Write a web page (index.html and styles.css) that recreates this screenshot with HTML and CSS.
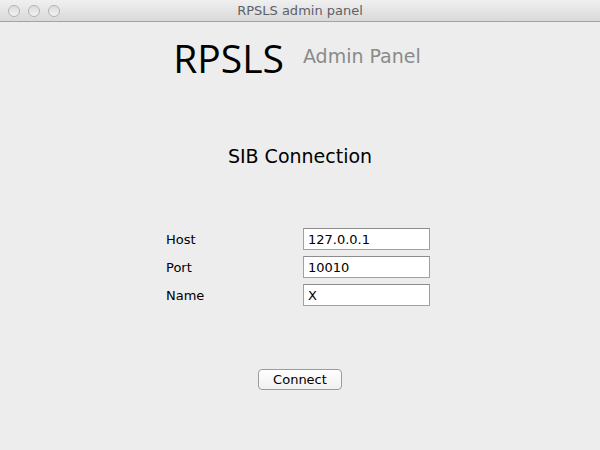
FILE: index.html
```html
<!DOCTYPE html>
<html>
<head>
<meta charset="utf-8">
<link rel="stylesheet" href="styles.css">
</head>
<body>
<div class="window">
  <div class="titlebar">
    <div class="lights">
      <span class="light"></span><span class="light"></span><span class="light"></span>
    </div>
    <div class="title">RPSLS admin panel</div>
  </div>
  <div class="content">
    <div class="header">
      <span class="brand">RPSLS</span>
      <span class="subtitle">Admin Panel</span>
    </div>
    <div class="section-title">SIB Connection</div>
    <div class="form">
      <label class="label">Host</label><input class="field" value="127.0.0.1">
      <label class="label">Port</label><input class="field" value="10010">
      <label class="label">Name</label><input class="field" value="X">
    </div>
    <button class="btn">Connect</button>
  </div>
</div>
</body>
</html>
```
FILE: styles.css
```css
html, body {
  margin: 0;
  padding: 0;
}
body {
  width: 600px;
  height: 450px;
  overflow: hidden;
  font-family: "DejaVu Sans", "Liberation Sans", sans-serif;
  background: #ededed;
}
.window {
  width: 600px;
  height: 450px;
  display: flex;
  flex-direction: column;
  background: #ededed;
}
.titlebar {
  height: 21px;
  border-bottom: 1px solid #a3a3a3;
  background: linear-gradient(#f0f0f0, #d9d9d9);
  display: flex;
  align-items: center;
  position: relative;
}
.lights {
  display: flex;
  gap: 8px;
  padding-left: 8px;
}
.light {
  width: 10px;
  height: 10px;
  border-radius: 50%;
  border: 1px solid #b4b4b4;
  background: linear-gradient(#dcdcdc, #f2f2f2);
}
.title {
  position: absolute;
  left: 0;
  right: 0;
  top: 0;
  line-height: 21px;
  text-align: center;
  font-size: 13px;
  color: #5e6068;
}
.content {
  display: flex;
  flex-direction: column;
  align-items: center;
}
.header {
  display: flex;
  align-items: baseline;
  gap: 19px;
  margin-top: 12px;
  height: 48px;
  margin-right: 6px;
}
.brand {
  font-family: "Open Sans", "DejaVu Sans", sans-serif;
  font-size: 39px;
  color: #000;
  line-height: 48px;
}
.subtitle {
  font-size: 19px;
  color: #8a8a8a;
  position: relative;
  top: -10px;
}
.section-title {
  margin-top: 62px;
  font-size: 19px;
  color: #000;
  line-height: 24px;
}
.form {
  margin-top: 60px;
  align-self: flex-start;
  margin-left: 166px;
  display: grid;
  grid-template-columns: 137px 127px;
  row-gap: 6px;
  align-items: center;
}
.label {
  font-size: 13px;
  color: #000;
}
.field {
  box-sizing: border-box;
  width: 127px;
  height: 22px;
  margin: 0;
  border: 1px solid #a0a0a0;
  border-top-color: #8c8c8c;
  background: #fff;
  font-family: "DejaVu Sans", sans-serif;
  font-size: 13px;
  padding: 0 4px;
  color: #000;
}
.btn {
  margin-top: 63px;
  box-sizing: border-box;
  width: 84px;
  height: 21px;
  border: 1px solid #9c9c9c;
  border-radius: 4px;
  background: linear-gradient(#ffffff, #f0f0f0);
  font-family: "DejaVu Sans", sans-serif;
  font-size: 13px;
  color: #000;
  padding: 0;
}
```
